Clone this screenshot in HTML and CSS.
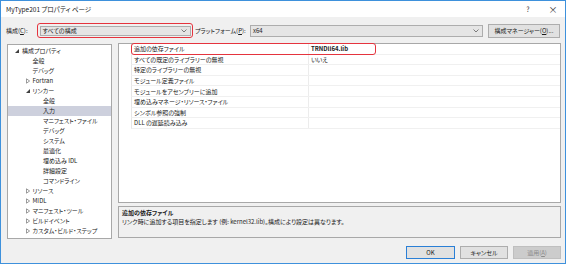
FILE: index.html
```html
<!DOCTYPE html>
<html lang="ja">
<head>
<meta charset="utf-8">
<title>MyType201 プロパティ ページ</title>
<link rel="stylesheet" href="styles.css">
</head>
<body>
<div class="window">
  <div class="titlebar">
    <span class="title">MyType201 プロパティ ページ</span>
    <span class="tb-btns"><span class="help">?</span><span class="close">×</span></span>
  </div>
  <div class="content">
    <div class="toolbar">
      <span class="lbl lbl-config">構成(<u>C</u>):</span>
      <div class="hl-box">
        <div class="combo combo-config"><span class="combo-text">すべての構成</span>
          <svg class="chev" width="6" height="4" viewBox="0 0 6 4"><path d="M0.5 0.5 L3 3 L5.5 0.5" fill="none" stroke="#606060" stroke-width="0.8"/></svg>
        </div>
      </div>
      <span class="lbl lbl-platform">プラットフォーム(<u>P</u>):</span>
      <div class="combo combo-platform"><span class="combo-text">x64</span>
        <svg class="chev" width="6" height="4" viewBox="0 0 6 4"><path d="M0.5 0.5 L3 3 L5.5 0.5" fill="none" stroke="#606060" stroke-width="0.8"/></svg>
      </div>
      <div class="btn btn-mgr">構成マネージャー(<u>O</u>)...</div>
    </div>
    <div class="main">
      <div class="tree">
        <div class="node lv0"><svg class="arr" width="6" height="6" viewBox="0 0 6 6"><path d="M5 1 L5 5 L1 5 Z" fill="#404040"/></svg><span>構成プロパティ</span></div>
        <div class="node lv1"><span class="noarr"></span><span>全般</span></div>
        <div class="node lv1"><span class="noarr"></span><span>デバッグ</span></div>
        <div class="node lv1"><svg class="arr" width="6" height="6" viewBox="0 0 6 6"><path d="M1.5 0.8 L4.6 3 L1.5 5.2 Z" fill="none" stroke="#707070" stroke-width="0.7"/></svg><span>Fortran</span></div>
        <div class="node lv1"><svg class="arr" width="6" height="6" viewBox="0 0 6 6"><path d="M5 1 L5 5 L1 5 Z" fill="#404040"/></svg><span>リンカー</span></div>
        <div class="node lv2"><span class="noarr"></span><span>全般</span></div>
        <div class="node lv2 selected"><span class="noarr"></span><span>入力</span></div>
        <div class="node lv2"><span class="noarr"></span><span>マニフェスト・ファイル</span></div>
        <div class="node lv2"><span class="noarr"></span><span>デバッグ</span></div>
        <div class="node lv2"><span class="noarr"></span><span>システム</span></div>
        <div class="node lv2"><span class="noarr"></span><span>最適化</span></div>
        <div class="node lv2"><span class="noarr"></span><span>埋め込み IDL</span></div>
        <div class="node lv2"><span class="noarr"></span><span>詳細設定</span></div>
        <div class="node lv2"><span class="noarr"></span><span>コマンドライン</span></div>
        <div class="node lv1"><svg class="arr" width="6" height="6" viewBox="0 0 6 6"><path d="M1.5 0.8 L4.6 3 L1.5 5.2 Z" fill="none" stroke="#707070" stroke-width="0.7"/></svg><span>リソース</span></div>
        <div class="node lv1"><svg class="arr" width="6" height="6" viewBox="0 0 6 6"><path d="M1.5 0.8 L4.6 3 L1.5 5.2 Z" fill="none" stroke="#707070" stroke-width="0.7"/></svg><span>MIDL</span></div>
        <div class="node lv1"><svg class="arr" width="6" height="6" viewBox="0 0 6 6"><path d="M1.5 0.8 L4.6 3 L1.5 5.2 Z" fill="none" stroke="#707070" stroke-width="0.7"/></svg><span>マニフェスト・ツール</span></div>
        <div class="node lv1"><svg class="arr" width="6" height="6" viewBox="0 0 6 6"><path d="M1.5 0.8 L4.6 3 L1.5 5.2 Z" fill="none" stroke="#707070" stroke-width="0.7"/></svg><span>ビルドイベント</span></div>
        <div class="node lv1"><svg class="arr" width="6" height="6" viewBox="0 0 6 6"><path d="M1.5 0.8 L4.6 3 L1.5 5.2 Z" fill="none" stroke="#707070" stroke-width="0.7"/></svg><span>カスタム・ビルド・ステップ</span></div>
      </div>
      <div class="right">
        <div class="grid">
          <div class="row"><span class="name">追加の依存ファイル</span><span class="val bold">TRNDll64.lib</span></div>
          <div class="row"><span class="name">すべての既定のライブラリーの無視</span><span class="val">いいえ</span></div>
          <div class="row"><span class="name">特定のライブラリーの無視</span><span class="val"></span></div>
          <div class="row"><span class="name">モジュール定義ファイル</span><span class="val"></span></div>
          <div class="row"><span class="name">モジュールをアセンブリーに追加</span><span class="val"></span></div>
          <div class="row"><span class="name">埋め込みマネージ・リソース・ファイル</span><span class="val"></span></div>
          <div class="row"><span class="name">シンボル参照の強制</span><span class="val"></span></div>
          <div class="row"><span class="name">DLL の遅延読み込み</span><span class="val"></span></div>
          <div class="red-mark"></div>
        </div>
        <div class="desc">
          <div class="desc-title">追加の依存ファイル</div>
          <div class="desc-text">リンク時に追加する項目を指定します (例: kernel32.lib)。構成により設定は異なります。</div>
        </div>
      </div>
    </div>
    <div class="buttons">
      <div class="btn btn-ok">OK</div>
      <div class="btn btn-cancel">キャンセル</div>
      <div class="btn btn-apply disabled">適用(<u>A</u>)</div>
    </div>
  </div>
</div>
</body>
</html>
```

FILE: styles.css
```css
* { box-sizing: border-box; }
html, body { margin: 0; padding: 0; background: #ffffff; }
body {
  font-family: "Noto Sans CJK JP", "Noto Sans", sans-serif;
  font-size: 6px;
  color: #1a1a1a;
  font-feature-settings: "palt";
}
u { text-decoration: underline; text-underline-offset: 0.5px; }

.window {
  width: 566px;
  height: 264px;
  border: 1px solid #3e91dc;
  background: #f0f0f0;
  display: flex;
  flex-direction: column;
}

.titlebar {
  height: 16px;
  background: #ffffff;
  display: flex;
  align-items: center;
  padding-left: 5px;
  flex: none;
}
.title { font-size: 6.5px; color: #222; }
.tb-btns { margin-left: auto; display: flex; align-items: center; }
.help { width: 26px; text-align: center; font-size: 7px; color: #333; }
.close { width: 24px; text-align: center; font-size: 9px; color: #333; }

.content {
  flex: 1;
  padding: 0 4px 0 5px;
  display: flex;
  flex-direction: column;
}

.toolbar {
  margin-top: 6px;
  height: 15px;
  display: flex;
  align-items: center;
  flex: none;
}
.lbl { white-space: nowrap; }
.lbl-config { width: 31px; }
.lbl-platform { width: 55px; margin-left: 2px; }

.hl-box {
  width: 156px;
  height: 15px;
  border: 1.5px solid #e5343e;
  border-radius: 3px;
  padding: 1.5px 1.5px;
  display: flex;
}
.combo {
  border: 1px solid #adadad;
  background: #e5e5e5;
  display: flex;
  align-items: center;
  padding: 0 3px 0 2px;
}
.combo-config { flex: 1; }
.combo-platform { width: 233px; height: 12px; }
.combo-text { flex: 1; white-space: nowrap; }
.chev { flex: none; }

.btn {
  border: 1px solid #adadad;
  background: #e1e1e1;
  display: flex;
  align-items: center;
  justify-content: center;
  white-space: nowrap;
}
.btn-mgr { margin-left: 5px; width: 72px; height: 14px; }

.main {
  margin-top: 5px;
  height: 197px;
  display: flex;
  flex: none;
}
.tree {
  margin-left: 1px;
  margin-top: 1px;
  width: 105px;
  height: 195px;
  border: 1px solid #a8a8a8;
  background: #ffffff;
  padding-top: 0.5px;
}
.node {
  height: 10px;
  display: flex;
  align-items: center;
  white-space: nowrap;
}
.node.lv0 { padding-left: 6px; }
.node.lv1 { padding-left: 16.5px; }
.node.lv2 { padding-left: 27px; }
.node.selected { background: #cdd0dd; }
.arr, .noarr { width: 6px; height: 6px; flex: none; margin-right: 2px; display: inline-block; }

.right {
  margin-left: 6px;
  width: 443px;
  display: flex;
  flex-direction: column;
}
.grid {
  position: relative;
  height: 160px;
  border: 1px solid #a8a8a8;
  background: #ffffff;
  padding-left: 12px;
  flex: none;
}
.row {
  height: 10.6px;
  display: flex;
  align-items: center;
  border-bottom: 1px solid #f0f0f0;
  border-left: 1px solid #e6e6e6;
}
.name { width: 176px; padding-left: 2px; white-space: nowrap; height: 100%; display: flex; align-items: center; }
.val { flex: 1; height: 100%; border-left: 1px solid #ececec; padding-left: 2px; display: flex; align-items: center; white-space: nowrap; }
.bold { font-weight: bold; }

.red-mark {
  position: absolute;
  left: 12px;
  top: -1px;
  width: 245px;
  height: 12px;
  border: 1.5px solid #e5343e;
  border-radius: 3px;
}

.desc {
  margin-top: 3px;
  height: 32px;
  border: 1px solid #a8a8a8;
  background: #f0f0f0;
  padding: 0.5px 3px 0 3px;
}
.desc-title { font-weight: bold; line-height: 9px; }
.desc-text { line-height: 9px; white-space: nowrap; }

.buttons {
  margin-top: 6px;
  display: flex;
  justify-content: flex-end;
  gap: 5px;
}
.btn-ok { width: 49px; height: 13px; border-color: #2a7fd6; }
.btn-cancel { width: 48px; height: 13px; }
.btn-apply { width: 48px; height: 13px; }
.btn.disabled { background: #cccccc; border-color: #bfbfbf; color: #8a8a8a; }
```
